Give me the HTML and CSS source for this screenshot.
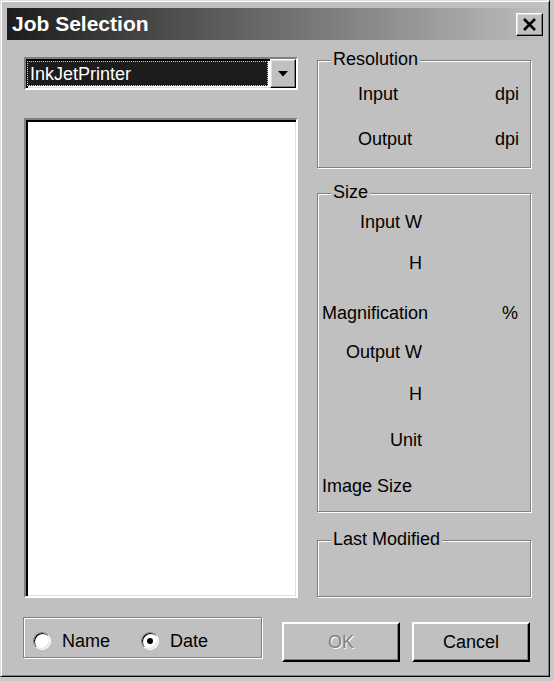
FILE: index.html
```html
<!DOCTYPE html>
<html>
<head>
<meta charset="utf-8">
<title>Job Selection</title>
<link rel="stylesheet" href="styles.css">
</head>
<body>
<div class="window">
  <div class="titlebar">
    <span class="title">Job Selection</span>
    <button class="close raised" aria-label="Close">
      <svg width="15" height="13" viewBox="0 0 15 13"><path d="M2 1 L13 12 M13 1 L2 12" stroke="#000" stroke-width="2.6" fill="none"/></svg>
    </button>
  </div>
  <div class="content">
    <div class="main">
      <div class="left">
        <div class="combo">
          <div class="combo-field"><div class="sel">InkJetPrinter</div></div>
          <div class="combo-btn raised">
            <svg width="10" height="6" viewBox="0 0 10 6"><polygon points="0,0 10,0 5,5.5" fill="#000"/></svg>
          </div>
        </div>
        <div class="list"></div>
      </div>
      <div class="right">
        <div class="group res">
          <span class="group-label">Resolution</span>
          <div class="row"><span>Input</span><span>dpi</span></div>
          <div class="row"><span>Output</span><span>dpi</span></div>
        </div>
        <div class="group size">
          <span class="group-label">Size</span>
          <div class="srow"><span class="lr">Input W</span></div>
          <div class="srow"><span class="lr">H</span></div>
          <div class="srow"><span class="ll">Magnification</span><span class="unit-r">%</span></div>
          <div class="srow"><span class="lr">Output W</span></div>
          <div class="srow"><span class="lr">H</span></div>
          <div class="srow"><span class="lr">Unit</span></div>
          <div class="srow"><span class="ll">Image Size</span></div>
        </div>
        <div class="group last">
          <span class="group-label">Last Modified</span>
        </div>
      </div>
    </div>
    <div class="bottom">
      <div class="radios">
        <label class="radio"><span class="dot"></span>Name</label>
        <label class="radio"><span class="dot on"></span>Date</label>
      </div>
      <button class="btn ok">OK</button>
      <button class="btn cancel">Cancel</button>
    </div>
  </div>
</div>
</body>
</html>
```
FILE: styles.css
```css
* { box-sizing: border-box; }
html, body { margin: 0; padding: 0; }
body {
  background: #c8c8c8;
  font-family: "Liberation Sans", Arial, sans-serif;
  font-size: 18px;
  color: #000;
  width: 554px;
  height: 681px;
  overflow: hidden;
}
.window {
  width: 550px;
  height: 677px;
  background: #c0c0c0;
  border: 1px solid;
  border-color: #dfdfdf #000 #000 #dfdfdf;
  box-shadow: inset 1px 1px 0 #fff, inset -1px -1px 0 #808080;
  padding: 7px 4px 0 6px;
}
.titlebar {
  height: 32px;
  display: flex;
  align-items: center;
  justify-content: space-between;
  background: linear-gradient(to right, #1c1c1c, #bebebe);
  padding: 0 2px 0 5px;
}
.title {
  color: #fff;
  font-weight: bold;
  font-size: 21px;
}
.raised {
  background: #c0c0c0;
  border: 1px solid;
  border-color: #fff #000 #000 #fff;
  box-shadow: inset -1px -1px 0 #808080, inset 1px 1px 0 #dfdfdf;
}
.close {
  width: 27px;
  height: 23px;
  padding: 0;
  margin-top: 1px;
  display: flex;
  align-items: center;
  justify-content: center;
}
.content {
  padding: 17px 14px 0 17px;
}
.main {
  display: flex;
  gap: 19px;
  height: 541px;
}
.left {
  width: 274px;
  display: flex;
  flex-direction: column;
}
.combo {
  height: 33px;
  display: flex;
  background: #fff;
  border: 2px solid;
  border-color: #808080 #fff #fff #808080;
  box-shadow: inset 2px 2px 0 #000, inset -1px -1px 0 #dfdfdf;
}
.combo-field {
  flex: 1;
  padding: 2px 2px 2px 1px;
  display: flex;
}
.sel {
  flex: 1;
  background: #1c1c1c;
  border: 1px dotted #d0d0d0;
  color: #fff;
  padding-left: 2px;
  display: flex;
  align-items: center;
  line-height: 20px;
  white-space: nowrap;
}
.combo-btn {
  width: 26px;
  display: flex;
  align-items: center;
  justify-content: center;
}
.list {
  flex: 1;
  margin-top: 28px;
  background: #fff;
  border: 2px solid;
  border-color: #808080 #fff #fff #808080;
  box-shadow: inset 2px 2px 0 #000, inset -1px -1px 0 #dfdfdf;
}
.right {
  width: 214px;
  padding-top: 3px;
  display: flex;
  flex-direction: column;
}
.group {
  position: relative;
  border: 1px solid #808080;
  box-shadow: inset 1px 1px 0 #fff, 1px 1px 0 #fff;
}
.group-label {
  position: absolute;
  top: -12px;
  left: 13px;
  padding: 0 2px;
  background: #c0c0c0;
  line-height: 20px;
  white-space: nowrap;
}
.res {
  height: 108px;
  padding: 23px 11px 0 40px;
  display: grid;
  grid-template-rows: 45px 20px;
  align-content: start;
}
.row {
  display: flex;
  justify-content: space-between;
  line-height: 20px;
}
.size {
  height: 319px;
  margin-top: 25px;
  padding: 18px 12px 0 0;
  display: grid;
  grid-template-rows: 41px 50px 39px 42px 46px 46px 20px;
  align-content: start;
}
.srow {
  display: flex;
  align-items: flex-start;
  line-height: 20px;
}
.lr {
  width: 104px;
  text-align: right;
  white-space: nowrap;
}
.ll {
  padding-left: 4px;
  white-space: nowrap;
}
.unit-r {
  margin-left: auto;
}
.last {
  height: 57px;
  margin-top: 28px;
}
.bottom {
  display: flex;
  align-items: flex-start;
  margin-top: 19px;
}
.radios {
  margin-left: -1px;
  width: 239px;
  height: 41px;
  border: 1px solid #808080;
  box-shadow: inset 1px 1px 0 #fff, 1px 1px 0 #fff;
  display: flex;
  align-items: center;
  padding: 6px 0 0 9px;
}
.radio {
  display: flex;
  align-items: center;
  gap: 11px;
  line-height: 20px;
}
.radio + .radio {
  margin-left: 31px;
}
.dot {
  position: relative;
  width: 18px;
  height: 18px;
  border-radius: 50%;
  background: #fff;
  border: 1px solid;
  border-color: #808080 #fff #fff #808080;
  box-shadow: inset 1px 1px 0 #000, inset -1px -1px 0 #dfdfdf;
}
.dot.on::after {
  content: "";
  position: absolute;
  width: 6px;
  height: 6px;
  border-radius: 50%;
  background: #000;
  left: 50%;
  top: 50%;
  transform: translate(-50%, -50%);
}
.btn {
  width: 118px;
  height: 40px;
  margin-top: 5px;
  padding: 0;
  font: inherit;
  color: #000;
  background: #c0c0c0;
  border: 2px solid;
  border-color: #fff #000 #000 #fff;
  box-shadow: inset -1px -1px 0 #808080;
}
.ok {
  margin-left: 20px;
  color: #808080;
  text-shadow: 1px 1px 0 #fff;
}
.cancel {
  margin-left: 12px;
}
```
